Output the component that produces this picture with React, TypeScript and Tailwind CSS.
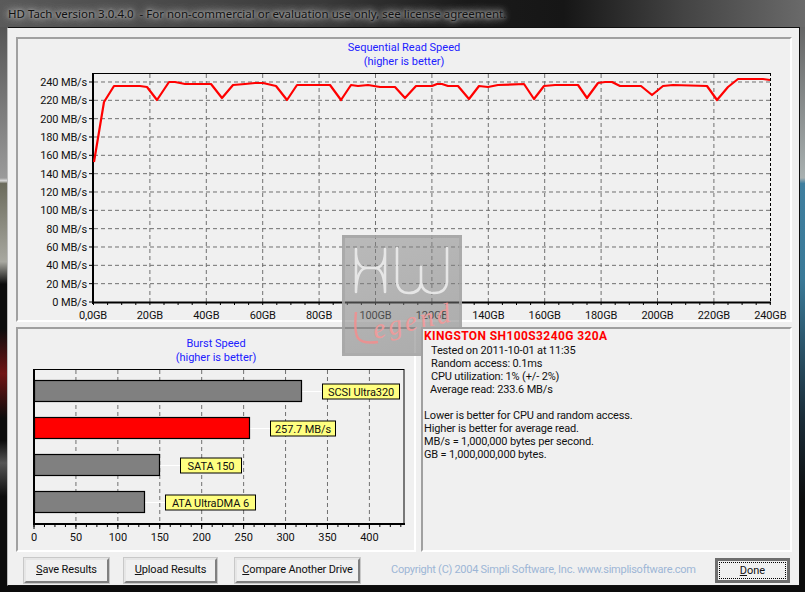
const font = "[font-family:Roboto,'Liberation_Sans',Arial,sans-serif]";

const readPoints =
  "94,162 104,102 114,86 140,86 147,87 157,100 169,82 175,82 185,84 211,84 222,98 233,85 245,84 255,83 263,83 276,86 287,100 297,85 330,85 341,100 351,85 358,86 368,85 380,87 395,87 405,98 416,86 432,86 437,84 442,84 448,86 458,86 469,99 479,86 488,87 498,85 524,84 534,99 544,86 555,85 578,85 587,98 598,83 605,82 612,82 620,86 641,86 652,95 663,86 673,85 707,86 717,100 728,87 738,79 763,79 770,80";

const speeds = [240, 220, 200, 180, 160, 140, 120, 100, 80, 60, 40, 20, 0];
const sizes = [20, 40, 60, 80, 100, 120, 140, 160, 180, 200, 220, 240];
const burstTicks = [0, 50, 100, 150, 200, 250, 300, 350, 400];

const speedY = (v: number) => 302 - v * 0.9167;
const sizeX = (g: number) => 93.5 + g * 2.82;
const burstX = (v: number) => 34 + v * 0.8385;

const bars = [
  { top: 380.5, end: 301.5, fill: "#808080", label: "SCSI Ultra320", lx: 322.5, lw: 77 },
  { top: 417.5, end: 249.5, fill: "#ff0000", label: "257.7 MB/s", lx: 270.5, lw: 65 },
  { top: 454.5, end: 159.5, fill: "#808080", label: "SATA 150", lx: 180.5, lw: 61 },
  { top: 491.5, end: 144.5, fill: "#808080", label: "ATA UltraDMA 6", lx: 165.5, lw: 90 },
];

function SpeedChart() {
  const minor: number[] = [];
  for (let i = 0; i <= 48; i++) minor.push(93.5 + i * 14.1);
  return (
    <svg viewBox="18 66 773 254" className="w-[773px] h-[254px] block overflow-visible" fontSize="11" letterSpacing="-0.15" fontFamily="Roboto, 'Liberation Sans', Arial, sans-serif">
      {speeds.slice(0, 12).map((v) => (
        <line key={v} x1="94" x2="770" y1={speedY(v)} y2={speedY(v)} stroke="#707070" strokeDasharray="4 3" />
      ))}
      {sizes.slice(0, 11).map((g) => (
        <line key={g} x1={sizeX(g)} x2={sizeX(g)} y1="74" y2="302" stroke="#707070" strokeDasharray="4 3" />
      ))}
      <line x1="92" x2="771" y1="73.5" y2="73.5" stroke="#000" />
      <line x1="770.5" x2="770.5" y1="73" y2="302" stroke="#000" strokeDasharray="3 2" />
      <line x1="93" x2="93" y1="73" y2="304" stroke="#000" strokeWidth="2" />
      <line x1="92" x2="771" y1="302.5" y2="302.5" stroke="#000" strokeWidth="2" />
      {minor.map((x) => (
        <line key={x} x1={x} x2={x} y1="303" y2="305" stroke="#000" />
      ))}
      {speeds.map((v) => (
        <g key={v}>
          <line x1="89" x2="92" y1={speedY(v)} y2={speedY(v)} stroke="#000" />
          <text x="87" y={speedY(v) + 4} textAnchor="end" fill="#111">{v} MB/s</text>
        </g>
      ))}
      <text x="93" y="318.5" textAnchor="middle" fill="#111">0,0GB</text>
      {sizes.map((g) => (
        <text key={g} x={sizeX(g)} y="318.5" textAnchor="middle" fill="#111">{g}GB</text>
      ))}
      <polyline points={readPoints} fill="none" stroke="#ff0000" strokeWidth="2.2" strokeLinejoin="round" />
    </svg>
  );
}

function BurstChart() {
  const minor: number[] = [];
  for (let i = 0; i <= 35; i++) minor.push(34 + i * 10.48);
  return (
    <svg viewBox="18 365 397 186" className="w-[397px] h-[186px] block overflow-visible" fontSize="11" letterSpacing="-0.1" fontFamily="Roboto, 'Liberation Sans', Arial, sans-serif">
      {burstTicks.slice(1).map((v) => (
        <line key={v} x1={burstX(v)} x2={burstX(v)} y1="370" y2="524" stroke="#707070" strokeDasharray="4 3" />
      ))}
      <rect x="34" y="369.5" width="370" height="154.5" fill="none" stroke="#000" />
      <line x1="34" x2="34" y1="369" y2="525" stroke="#000" strokeWidth="2" />
      <line x1="33" x2="405" y1="524" y2="524" stroke="#000" strokeWidth="2" />
      {minor.map((x) => (
        <line key={x} x1={x} x2={x} y1="525" y2="527" stroke="#000" />
      ))}
      {burstTicks.map((v) => (
        <g key={v}>
          <line x1={burstX(v)} x2={burstX(v)} y1="525" y2="529" stroke="#000" />
          <text x={burstX(v)} y="541" textAnchor="middle" fill="#111">{v}</text>
        </g>
      ))}
      {bars.map((b) => (
        <g key={b.label}>
          <line x1={b.end} x2={b.lx} y1={b.top + 11} y2={b.top + 11} stroke="#fff" />
          <rect x="34.5" y={b.top} width={b.end - 34.5} height="21" fill={b.fill} stroke="#000" strokeWidth="1.2" />
          <rect x={b.lx} y={b.top + 3.5} width={b.lw} height="15" fill="#ffff80" stroke="#000" />
          <text x={b.lx + b.lw / 2} y={b.top + 15.5} textAnchor="middle" fill="#111">{b.label}</text>
        </g>
      ))}
    </svg>
  );
}

function Watermark() {
  return (
    <div className="absolute left-[334px] top-[207px] w-[120px] h-[121px] bg-[linear-gradient(160deg,#8a8a8a88_0%,#70707088_100%)] border-[3px] border-[#a8a8a8]/80 pointer-events-none">
      <svg viewBox="345 238 114 115" className="w-[114px] h-[115px] block" fill="none">
        <g stroke="#ececec" strokeWidth="2.6" strokeLinecap="round" opacity="0.9">
          <path d="M356 249V292M385 249V292M356 254Q357 268 367 268H375Q384 268 385 254M356 291Q357 268 367 268M385 291Q384 268 375 268" />
          <path d="M397 248V282Q398 293 409 293Q420 293 421 283V267M421 283Q423 293 434 293Q446 293 447 282V248" />
        </g>
        <path d="M356 312Q354 332 358 338Q362 344 378 342" stroke="#ef8f8f" strokeWidth="2.4" opacity="0.9" />
        <text x="375" y="339" transform="rotate(-13 375 339)" fontFamily="'Liberation Serif', serif" fontStyle="italic" fontSize="28" letterSpacing="3" fill="#f09a9a" opacity="0.95">egend</text>
      </svg>
    </div>
  );
}

function ActionButton({ first, rest, className }: { first: string; rest: string; className: string }) {
  return (
    <button className={`h-[25px] whitespace-nowrap bg-[#f0f0f0] border-2 border-t-[#e6e6e6] border-l-[#e6e6e6] border-r-[#808080] border-b-[#808080] outline outline-1 outline-[#c8c8c8] text-[11px] tracking-[-0.15px] text-[#111] ${className}`}>
      <u>{first}</u>{rest}
    </button>
  );
}

export default function App() {
  return (
    <div className={`w-[805px] h-[592px] flex flex-col overflow-hidden bg-[#0c0c0c] ${font}`}>
      <div className="h-[27px] shrink-0 flex items-center pl-[8px] bg-[linear-gradient(90deg,#5a5a5a_0%,#3a3a3a_40%,#1a1a1a_58%,#161616_70%,#444_85%,#6a6a6a_100%)]">
        <span className="text-[11.5px] text-[#111] whitespace-pre [font-family:'Noto_Sans',sans-serif] [text-shadow:0_0_3px_#b0b0b0,0_0_6px_#b0b0b0,0_0_10px_#b0b0b0,0_0_12px_#a0a0a0]">
          HD Tach version 3.0.4.0  - For non-commercial or evaluation use only, see license agreement.
        </span>
      </div>
      <div className="flex-1 flex min-h-0">
        <div className="w-[7px] shrink-0 bg-[linear-gradient(180deg,#555_0%,#9a9a9a_27%,#d8d8d8_27.5%,#6b6b5c_28%,#a8a8a0_42%,#0c0c0c_46%,#0c0c0c_54%,#701515_62%,#0c0c0c_70%,#0c0c0c_74%,#555_78%,#0c0c0c_84%)]" />
        <div className="w-[793px] shrink-0 h-[559px] relative border border-t-[#111] border-r-[#111] border-b-[#111] border-l-[#bbb] bg-[#f0f0f0] pt-[9px] pl-[8px] flex flex-col">
          <div className="w-[776px] h-[285px] border-t-2 border-l-2 border-[#a0a0a0] border-r-2 border-r-white border-b-2 border-b-white">
            <div className="text-center text-[#2020ff] text-[11px] leading-[14px] pt-[2px] h-[27px]">
              <p>Sequential Read Speed</p>
              <p>(higher is better)</p>
            </div>
            <SpeedChart />
          </div>
          <div className="flex mt-[5px] h-[225px]">
            <div className="w-[400px] border-t-2 border-l-2 border-[#a0a0a0] border-r-2 border-r-white border-b-2 border-b-white">
              <div className="text-center text-[#2020ff] text-[11px] leading-[14px] pt-[8px] h-[36px]">
                <p>Burst Speed</p>
                <p>(higher is better)</p>
              </div>
              <BurstChart />
            </div>
            <div className="relative z-10 ml-[5px] w-[371px] bg-[#f0f0f0] border-t-2 border-l-2 border-[#a0a0a0] border-r-2 border-r-white border-b-2 border-b-white pl-[1px] text-[11px] tracking-[-0.15px] leading-[13px] text-[#111]">
              <p className="font-bold text-[#ff0000] text-[12px] tracking-[0.4px] mt-[1px]">KINGSTON SH100S3240G 320A</p>
              <p className="ml-[7px] mt-[1px]">Tested on 2011-10-01 at 11:35</p>
              <p className="ml-[7px]">Random access: 0.1ms</p>
              <p className="ml-[7px]">CPU utilization: 1% (+/- 2%)</p>
              <p className="ml-[6px]">Average read: 233.6 MB/s</p>
              <p className="mt-[13px]">Lower is better for CPU and random access.</p>
              <p>Higher is better for average read.</p>
              <p>MB/s = 1,000,000 bytes per second.</p>
              <p>GB = 1,000,000,000 bytes.</p>
            </div>
          </div>
          <div className="flex items-center mt-[6px] pl-[8px]">
            <ActionButton first="S" rest="ave Results" className="w-[85px]" />
            <ActionButton first="U" rest="pload Results" className="w-[93px] ml-[15px]" />
            <ActionButton first="C" rest="ompare Another Drive" className="w-[125px] ml-[18px]" />
            <span className="ml-[31px] w-[324px] text-[11px] tracking-[-0.26px] text-[#9db6d6] whitespace-nowrap">
              Copyright (C) 2004 Simpli Software, Inc. www.simplisoftware.com
            </span>
            <button className="w-[75px] h-[25px] border-[3px] border-[#6e6e6e] bg-[#f0f0f0] p-[1px] text-[11px] text-[#111]">
              <span className="block h-full leading-[15px] border border-dotted border-black">
                <u>D</u>one
              </span>
            </button>
          </div>
          <Watermark />
        </div>
        <div className="flex-1 bg-[linear-gradient(180deg,#666_0%,#a8b0b0_27%,#3f7f9f_28%,#3a7a98_45%,#1a2c38_70%,#0c0c0c_85%)]" />
      </div>
      <div className="h-[6px] shrink-0 bg-[#0c0c0c]" />
    </div>
  );
}
